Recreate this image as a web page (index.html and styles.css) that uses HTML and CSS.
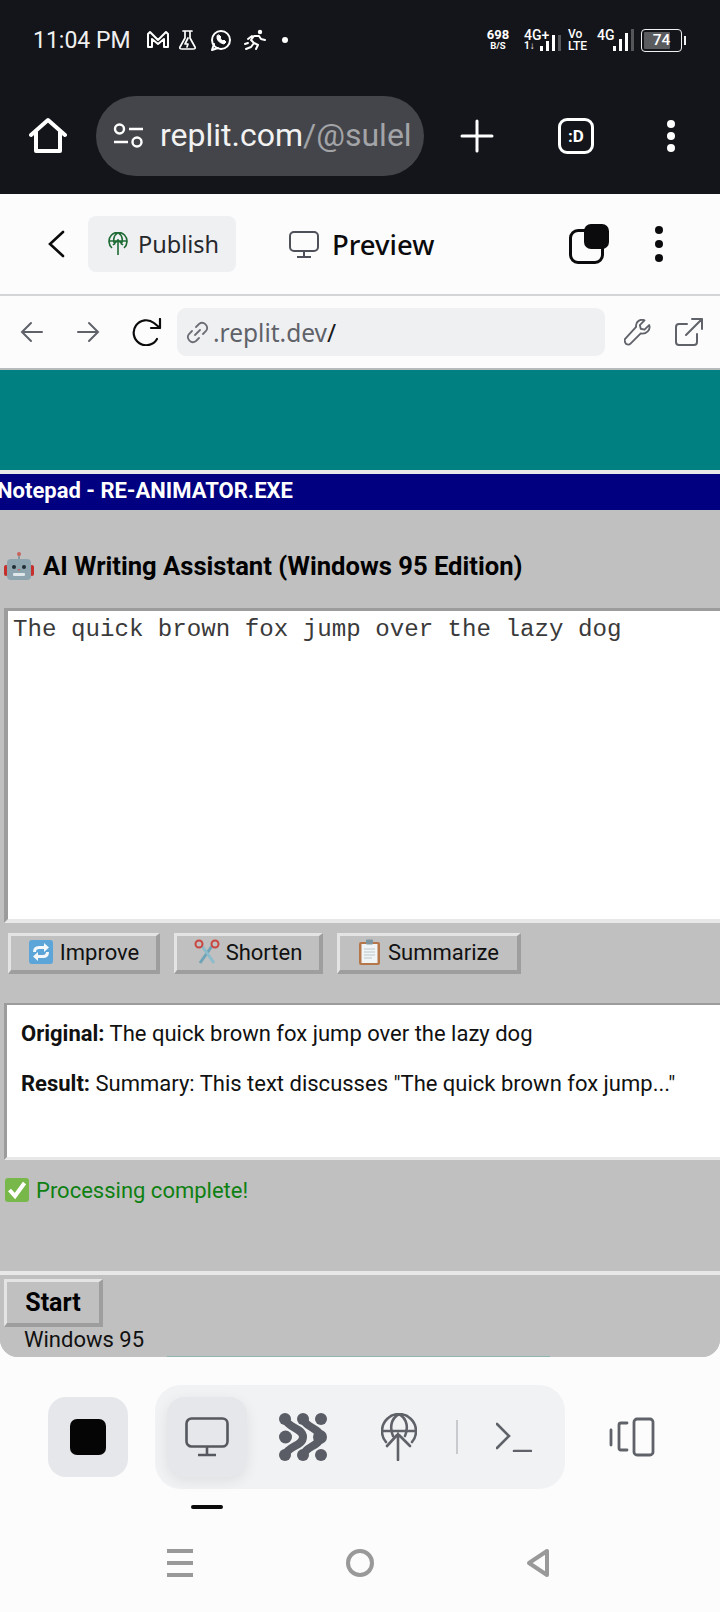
FILE: index.html
```html
<!DOCTYPE html>
<html lang="en">
<head>
    <meta charset="UTF-8">
    <meta name="viewport" content="width=device-width, initial-scale=1.0">
    <title>RE-ANIMATOR.EXE</title>
    <link rel="stylesheet" href="styles.css">
</head>
<body>
    <div class="phone">
        <header class="chrome">
            <div class="status-row">
                <span class="clock">11:04 PM</span>
                <svg class="note-icons" width="142" height="30" viewBox="0 0 142 30" fill="none" stroke="#fff" stroke-width="2" stroke-linejoin="round" stroke-linecap="round">
                    <path d="M2 22V9l2-2 8 8 8-8 2 2v13h-4v-8l-6 5-6-5v8z"/>
                    <path d="M37 6h9M39 6v7l-5 9q-1 2 2 2h11q3 0 2-2l-5-9V6M42 13l-3 6h3l-1 3" stroke-width="1.7"/>
                    <circle cx="75" cy="15" r="9"/>
                    <path d="M66 25l2-6M66 25l6-2"/>
                    <path d="M71 11q-1 6 7 8l2-2-2-2-1 1q-2-1-3-3l1-1-2-2z" fill="#fff" stroke-width="1"/>
                    <circle cx="114" cy="7" r="2.200" fill="#fff" stroke="none"/>
                    <path d="M100 24l5-2 3-4-3-3 3-4 5 0 2 3 4 1M108 18l4 2-2 4M102 14l4-3M99 19l3-1" stroke-width="2"/>
                    <circle cx="139" cy="15" r="3" fill="#fff" stroke="none"/>
                </svg>
                <div class="net">
                    <div class="speed"><b>698</b><small>B/S</small></div>
                    <div class="sim sim-first">
                        <span class="sim-text">4G+<small>1↓</small></span>
                        <svg width="22" height="16" viewBox="0 0 22 16" fill="#fff"><rect x="0" y="11" width="3" height="5"/><rect x="6" y="6" width="3" height="10"/><rect x="12" y="0" width="3" height="16"/><rect x="18" y="-6" width="3" height="22" fill="#55565a"/></svg>
                    </div>
                    <div class="volte">Vo<br>LTE</div>
                    <div class="sim">
                        <span class="sim-text sim-top">4G</span>
                        <svg width="21" height="22" viewBox="0 0 21 22" fill="#fff"><rect x="0" y="17" width="3" height="5"/><rect x="6" y="10" width="3" height="12"/><rect x="12" y="4" width="3" height="18"/><rect x="18" y="0" width="3" height="22" fill="#55565a"/></svg>
                    </div>
                    <div class="battery"><span class="level"></span><span class="percent">74</span></div>
                    <span class="battery-tip"></span>
                </div>
            </div>
            <div class="browser-row">
                <svg class="home-icon" width="38" height="38" viewBox="0 0 38 38" fill="none" stroke="#fff" stroke-width="4" stroke-linejoin="round" stroke-linecap="round"><path d="M2 18L19 3l17 15M7 15v19h24V15"/></svg>
                <div class="omnibox">
                    <svg width="30" height="26" viewBox="0 0 30 26" fill="none" stroke="#fff" stroke-width="2.4"><circle cx="6.500" cy="6" r="4.500"/><path d="M16 6h14M1 19h14"/><circle cx="24" cy="19" r="4.500"/></svg>
                    <span class="url">replit.com<span class="url-dim">/@sulel</span></span>
                </div>
                <svg class="plus-icon" width="34" height="34" viewBox="0 0 34 34" stroke="#fff" stroke-width="3" stroke-linecap="round"><path d="M17 2v30M2 17h30"/></svg>
                <div class="tab-count">:D</div>
                <div class="dots dots-white"><i></i><i></i><i></i></div>
            </div>
        </header>

        <div class="appbar">
            <svg class="back-icon" width="18" height="28" viewBox="0 0 18 28" fill="none" stroke="#0b0b0d" stroke-width="2.600" stroke-linecap="round"><path d="M16 2L3 14l13 12"/></svg>
            <div class="publish">
                <svg width="20" height="24" viewBox="0 0 20 24" fill="none" stroke="#1f6b34" stroke-width="1.600"><path d="M4 16A9 9 0 1 1 16 16M1 9h18M10 0.500c-5 3-5 9-3 12M10 0.500c5 3 5 9 3 12M10 23V8M5 13l5-5 5 5"/></svg>
                <span>Publish</span>
            </div>
            <svg class="monitor-icon" width="30" height="27" viewBox="0 0 30 27" fill="none" stroke="#4e5159" stroke-width="2"><rect x="1" y="1" width="28" height="19" rx="4"/><path d="M15 20v5M8 26h14"/></svg>
            <span class="preview">Preview</span>
            <div class="overlap"><span class="back-square"></span><span class="front-square"></span></div>
            <div class="dots dots-dark"><i></i><i></i><i></i></div>
        </div>

        <div class="urlbar">
            <svg class="nav-arrow" width="24" height="22" viewBox="0 0 24 22" fill="none" stroke="#5f6269" stroke-width="2" stroke-linecap="round"><path d="M22 11H2M11 2l-9 9 9 9"/></svg>
            <svg class="nav-arrow arrow-next" width="24" height="22" viewBox="0 0 24 22" fill="none" stroke="#5f6269" stroke-width="2" stroke-linecap="round"><path d="M2 11h20M13 2l9 9-9 9"/></svg>
            <svg class="reload-icon" width="30" height="28" viewBox="0 0 30 28" fill="none" stroke="#0b0b0d" stroke-width="2.200" stroke-linecap="round" stroke-linejoin="round"><path d="M25 21A12.500 12.500 0 1 1 22 5l6 5M28 1v9h-9"/></svg>
            <div class="address">
                <svg width="23" height="23" viewBox="0 0 23 23" fill="none" stroke="#6b6e75" stroke-width="1.800" stroke-linecap="round"><path d="M9 14l5-5M10 6l3-3a5 5 0 0 1 7 7l-3 3M13 17l-3 3a5 5 0 0 1-7-7l3-3"/></svg>
                <span class="host">.replit.dev<span class="host-path">/</span></span>
            </div>
            <svg class="wrench-icon" width="27" height="27" viewBox="0 0 29 28" fill="none" stroke="#5f6269" stroke-width="2" stroke-linejoin="round"><path d="M27 6l-5 5-4-1-1-4 5-5c-4-2-10 1-9 7L1 21q-1 2 1 5 3 2 5 0l11-11c6 1 11-4 9-9z"/></svg>
            <svg class="external-icon" width="28" height="28" viewBox="0 0 28 28" fill="none" stroke="#5f6269" stroke-width="2" stroke-linecap="round" stroke-linejoin="round"><path d="M12 6H4Q1 6 1 9v15q0 3 3 3h15q3 0 3-3v-8M11 17L27 1M17 1h10v10"/></svg>
        </div>

        <main class="desktop">
            <div class="wallpaper"></div>
            <section class="window">
                <div class="titlebar">Notepad - RE-ANIMATOR.EXE</div>
                <div class="window-body">
                    <h1 class="heading">
                        <svg class="emoji" width="30" height="30" viewBox="0 0 30 30"><rect x="0" y="14" width="4" height="11" rx="2" fill="#c62f2b"/><rect x="26" y="14" width="4" height="11" rx="2" fill="#c62f2b"/><rect x="14" y="3" width="2" height="6" fill="#8a9aa3"/><circle cx="15" cy="3" r="2" fill="#c9635c"/><rect x="3" y="8" width="24" height="21" rx="4" fill="#8ea4ae"/><circle cx="10" cy="16" r="2" fill="#222c33"/><circle cx="20" cy="16" r="2" fill="#222c33"/><path d="M13.500 18h3L15 20z" fill="#c9635c"/><rect x="9" y="22" width="12" height="3" rx="1" fill="#dfe7ea"/></svg>
                        AI Writing Assistant (Windows 95 Edition)
                    </h1>
                    <textarea class="editor" spellcheck="false">The quick brown fox jump over the lazy dog</textarea>
                    <div class="actions">
                        <button class="btn btn-improve">
                            <svg class="emoji" width="26" height="26" viewBox="0 0 26 26"><rect x="1" y="1" width="24" height="24" rx="3" fill="#5ba5d8"/><path d="M5 13q0-6 6-6h5V4l5 4.500-5 4.500v-3h-5q-3 0-3 3zM21 13q0 6-6 6h-5v3l-5-4.500L10 13v3h5q3 0 3-3z" fill="#f4f8fb"/></svg>
                            Improve
                        </button>
                        <button class="btn btn-shorten">
                            <svg class="emoji" width="26" height="26" viewBox="0 0 26 26" fill="none"><path d="M18 7L6 24" stroke="#6fa4b8" stroke-width="3"/><path d="M8 7l12 17" stroke="#8cbccc" stroke-width="3"/><circle cx="5" cy="5" r="3.500" stroke="#c9473f" stroke-width="2"/><circle cx="21" cy="5" r="3.500" stroke="#c9473f" stroke-width="2"/></svg>
                            Shorten
                        </button>
                        <button class="btn btn-summarize">
                            <svg class="emoji" width="24" height="26" viewBox="0 0 24 26"><rect x="1" y="3" width="21" height="23" rx="2" fill="#b5764a"/><rect x="3.500" y="5" width="16" height="19" fill="#f1f4f5"/><rect x="8" y="0.500" width="7" height="5" rx="1" fill="#7f95a0"/><path d="M6 10h11M6 13h11M6 16h11M6 19h8" stroke="#b9c6cc" stroke-width="1"/></svg>
                            Summarize
                        </button>
                    </div>
                    <div class="result">
                        <p><strong>Original:</strong> The quick brown fox jump over the lazy dog</p>
                        <p><strong>Result:</strong> Summary: This text discusses "The quick brown fox jump..."</p>
                    </div>
                    <div class="status">
                        <svg class="emoji" width="26" height="26" viewBox="0 0 26 26"><rect x="1" y="1" width="24" height="24" rx="3" fill="#78b84a"/><path d="M5.500 13l5.500 6L20.500 6" fill="none" stroke="#fff" stroke-width="4"/></svg>
                        Processing complete!
                    </div>
                </div>
                <footer class="taskbar">
                    <button class="start">Start</button>
                    <div class="task-label">Windows 95</div>
                </footer>
            </section>
        </main>

        <div class="dock">
            <div class="dock-row">
                <div class="dock-stop"><span class="stop-square"></span></div>
                <div class="dock-group">
                    <div class="dock-tab dock-tab-active">
                        <svg width="44" height="40" viewBox="0 0 44 40" fill="none" stroke="#55585f" stroke-width="2.600"><rect x="1.500" y="1.500" width="41" height="28" rx="5"/><path d="M22 30v7M13 38h18"/></svg>
                    </div>
                    <div class="dock-tab">
                        <svg width="48" height="48" viewBox="0 0 48 48" fill="#5a5d65" stroke="none">
                            <circle cx="6" cy="6" r="6"/><circle cx="24" cy="6" r="6"/><circle cx="42" cy="6" r="6"/>
                            <circle cx="6.500" cy="24" r="6.500"/><circle cx="41" cy="24" r="7"/>
                            <circle cx="6" cy="42" r="6"/><circle cx="24" cy="42" r="6"/><circle cx="42" cy="42" r="6"/>
                            <path d="M6 6c3 9 18 9 18 18S9 33 6 42M24 6c3 9 17 9 17 18s-14 9-17 18" fill="none" stroke="#5a5d65" stroke-width="8"/>
                        </svg>
                    </div>
                    <div class="dock-tab">
                        <svg width="36" height="48" viewBox="0 0 36 48" fill="none" stroke="#5f6269" stroke-width="2.600" stroke-linecap="round"><path d="M5 29A17 17 0 1 1 31 29M2 18h32M18 1c-9 5-9 15-6 22M18 1c9 5 9 15 6 22M17 47V21M6 33l11-12 12 12"/></svg>
                    </div>
                    <span class="dock-divider"></span>
                    <svg class="terminal-icon" width="36" height="30" viewBox="0 0 36 30" fill="none" stroke="#5f6269" stroke-width="2.600" stroke-linecap="round"><path d="M1 2l12 12L1 26M18 29h17"/></svg>
                </div>
                <svg class="panel-icon" width="46" height="40" viewBox="0 0 46 40" fill="none" stroke="#5f6269" stroke-width="2.800" stroke-linejoin="round" stroke-linecap="round"><path d="M2 13v15M18 6h-6q-2 0-2 2v23q0 2 2 2h6"/><rect x="25" y="2" width="19" height="36" rx="3"/></svg>
            </div>
            <div class="indicator"></div>
            <nav class="system-nav">
                <div class="sys-menu"><i></i><i></i><i></i></div>
                <span class="sys-home"></span>
                <svg class="sys-back" width="24" height="30" viewBox="0 0 24 30" fill="none" stroke="#999" stroke-width="4" stroke-linejoin="round"><path d="M21 3v24L3 15z"/></svg>
            </nav>
        </div>
    </div>
</body>
</html>
```

FILE: styles.css
```css
* { box-sizing: border-box; }
html, body { margin: 0; padding: 0; }
body { width: 720px; height: 1612px; overflow: hidden; background: #fcfcfc; font-family: Roboto, "Liberation Sans", sans-serif; }
svg { display: block; flex: none; }
.phone { width: 720px; height: 1612px; display: flex; flex-direction: column; }

/* android status bar + browser */
.chrome { height: 194px; background: #14151a; color: #fff; }
.status-row { height: 80px; display: flex; align-items: center; padding-left: 33px; }
.clock { font-size: 23px; width: 113px; color: #f0f0f0; flex: none; }
.net { display: flex; align-items: center; margin-left: 197px; height: 26px; }
.speed { width: 26px; display: flex; flex-direction: column; align-items: center; line-height: 11px; }
.speed b { font-size: 13px; font-weight: 700; }
.speed small { font-size: 9.500px; font-weight: 700; }
.sim { display: flex; align-items: flex-end; height: 22px; }
.sim-first { margin-left: 13px; }
.sim-text { font-size: 14px; font-weight: 500; line-height: 12px; width: 16px; height: 22px; white-space: nowrap; }
.sim-text small { display: block; font-size: 10px; font-weight: 700; line-height: 10px; }
.sim + .volte { margin-left: 6px; }
.volte { font-size: 12px; font-weight: 500; line-height: 12px; width: 20px; }
.volte + .sim { margin-left: 9px; }
.battery { width: 41px; height: 23px; margin-left: 7px; border: 1.500px solid #f0f0f0; border-radius: 4px; position: relative; font-size: 15.500px; font-weight: 500; text-align: center; line-height: 20px; }
.level { position: absolute; left: 2px; top: 2px; bottom: 2px; width: 26px; background: #5a5b5f; border-radius: 1px; }
.percent { position: relative; }
.battery-tip { width: 2px; height: 9px; background: #f0f0f0; margin-left: 2px; }
.browser-row { height: 114px; display: flex; align-items: center; padding-bottom: 2px; padding-left: 29px; }
.omnibox { width: 328px; height: 80px; margin-left: 29px; background: #44454a; border-radius: 40px; display: flex; align-items: center; padding-left: 17px; gap: 17px; overflow: hidden; }
.url { font-size: 32px; color: #f2f2f2; white-space: nowrap; position: relative; top: -1px; }
.url-dim { color: #a3a4a7; }
.plus-icon { margin-left: 36px; }
.tab-count { width: 36px; height: 36px; margin-left: 64px; border: 3.500px solid #fff; border-radius: 9px; font-size: 17px; font-weight: 700; display: flex; align-items: center; justify-content: center; }
.dots { display: flex; flex-direction: column; justify-content: space-between; }
.dots i { display: block; border-radius: 50%; }
.dots-white { height: 32px; margin-left: 73px; }
.dots-white i { width: 8px; height: 8px; background: #fff; }

/* replit top bar */
.appbar { height: 102px; display: flex; align-items: center; border-bottom: 2px solid #d4d5d7; padding-left: 47px; background: #fcfcfc; }
.publish { width: 148px; height: 56px; margin-left: 23px; background: #eff0f2; border-radius: 8px; display: flex; align-items: center; padding-left: 20px; gap: 10px; font-family: "Noto Sans", sans-serif; font-size: 23.500px; color: #26282c; }
.monitor-icon { margin-left: 53px; }
.preview { margin-left: 13px; font-family: "Noto Sans", sans-serif; font-size: 27.500px; font-weight: 500; color: #0b0b0d; }
.overlap { width: 40px; height: 40px; margin-left: 135px; position: relative; }
.back-square { position: absolute; left: 0; bottom: 0; width: 35px; height: 35px; border: 3px solid #0b0b0d; border-radius: 9px; }
.front-square { position: absolute; right: 0; top: 0; width: 25px; height: 25px; background: #0b0b0d; border-radius: 7px; }
.dots-dark { height: 36px; margin-left: 46px; }
.dots-dark i { width: 8px; height: 8px; background: #0b0b0d; }

/* webview url bar */
.urlbar { height: 74px; display: flex; align-items: center; border-bottom: 2px solid #b6bcbc; padding-left: 20px; background: #fcfcfc; }
.arrow-next { margin-left: 32px; }
.reload-icon { margin-left: 32px; }
.address { width: 428px; height: 48px; margin-left: 15px; background: #eff0f2; border-radius: 9px; display: flex; align-items: center; padding-left: 9px; gap: 4px; }
.host { font-family: "Noto Sans", sans-serif; font-size: 24.500px; color: #5f6269; }
.host-path { color: #1a1a1c; }
.wrench-icon { margin-left: 19px; }
.external-icon { margin-left: 24px; }

/* the win95 page */
.desktop { height: 987px; display: flex; flex-direction: column; background: #c0c0c0; border-radius: 0 0 18px 18px; overflow: hidden; position: relative; }
.desktop::after { content: ""; position: absolute; left: 167px; width: 383px; bottom: 0; height: 1px; background: #8fb5b0; }
.wallpaper { height: 100px; background: #008080; flex: none; }
.window { flex: 1; display: flex; flex-direction: column; border-top: 4px solid #e8e8e8; background: #c0c0c0; }
.titlebar { height: 36px; background: #000080; color: #fff; font-size: 22px; font-weight: 700; line-height: 33px; text-indent: -3px; white-space: nowrap; overflow: hidden; }
.window-body { flex: 1; padding: 38px 0 0 4px; display: flex; flex-direction: column; }
.heading { margin: 0 0 24px; height: 36px; display: flex; align-items: center; gap: 9px; font-size: 25.600px; font-weight: 700; color: #000; line-height: 36px; white-space: nowrap; }
.emoji { display: inline-block; }
.editor { display: block; width: 730px; height: 315px; margin: 0; padding: 5px 5px; border-style: solid; border-width: 3px 4px 4px 4px; border-color: #9c9c9c #e8e8e8 #e8e8e8 #9c9c9c; background: #fff; color: #3a3a3a; font-family: "Liberation Mono", monospace; font-size: 24.150px; line-height: 28px; resize: none; outline: none; border-radius: 0; overflow: hidden; flex: none; }
.actions { display: flex; margin: 10px 0 0 4px; height: 41px; gap: 14px; flex: none; }
.btn { display: flex; align-items: center; justify-content: center; gap: 6px; height: 41px; padding: 0 0 2px; background: #c0c0c0; border-style: solid; border-width: 3px 4px 4px 3px; border-color: #e4e4e4 #9e9e9e #9e9e9e #e4e4e4; color: #111; font-family: Roboto, sans-serif; font-size: 22px; cursor: pointer; }
.btn-improve { width: 152px; }
.btn-shorten { width: 149px; }
.btn-summarize { width: 184px; }
.result { width: 730px; height: 157px; margin-top: 29px; padding: 14px 14px; background: #fff; border-style: solid; border-width: 2px 3px 3px 3px; border-color: #9c9c9c #e8e8e8 #e8e8e8 #9c9c9c; font-size: 22px; line-height: 30px; color: #111; flex: none; }
.result p { margin: 0 0 20px; white-space: nowrap; }
.result strong { font-weight: 700; }
.status { margin-top: 15px; height: 30px; display: flex; align-items: center; gap: 6px; font-size: 22px; color: #0f8012; }
.taskbar { height: 86px; border-top: 4px solid #e8e8e8; padding: 4px 0 0 4px; flex: none; }
.start { display: block; width: 99px; height: 48px; padding: 0; background: #c0c0c0; border-style: solid; border-width: 3px 4px 4px 3px; border-color: #e4e4e4 #9e9e9e #9e9e9e #e4e4e4; font-family: Roboto, sans-serif; font-size: 25px; font-weight: 700; color: #000; }
.task-label { padding: 2px 0 0 20px; line-height: 22px; font-size: 22px; color: #111; }

/* replit dock */
.dock { flex: 1; background: #fcfcfc; padding-top: 28px; }
.dock-row { display: flex; align-items: center; height: 104px; padding-left: 48px; }
.dock-stop { width: 80px; height: 80px; border-radius: 18px; background: #e6e7ea; display: flex; align-items: center; justify-content: center; }
.stop-square { width: 36px; height: 36px; background: #050506; border-radius: 7px; }
.dock-group { width: 410px; height: 104px; margin-left: 27px; background: #f1f2f4; border-radius: 26px; display: flex; align-items: center; padding-left: 12px; }
.dock-tab { width: 80px; height: 80px; border-radius: 18px; display: flex; align-items: center; justify-content: center; }
.dock-tab + .dock-tab { margin-left: 16px; }
.dock-tab-active { background: #e6e7ea; box-shadow: 0 4px 14px rgba(0,0,0,0.08); }
.dock-divider { width: 2px; height: 34px; background: #c9cacd; margin-left: 17px; }
.terminal-icon { margin-left: 38px; }
.panel-icon { margin-left: 44px; }
.indicator { width: 32px; height: 4px; margin: 16px 0 0 191px; background: #0a0a0a; border-radius: 2px; }
.system-nav { height: 30px; margin-top: 39px; display: flex; align-items: center; padding-left: 167px; }
.sys-menu { width: 26px; height: 28px; display: flex; flex-direction: column; justify-content: space-between; }
.sys-menu i { display: block; height: 4px; background: #999; }
.sys-home { width: 28px; height: 28px; margin-left: 153px; border: 4px solid #999; border-radius: 50%; }
.sys-back { margin-left: 152px; }
```
